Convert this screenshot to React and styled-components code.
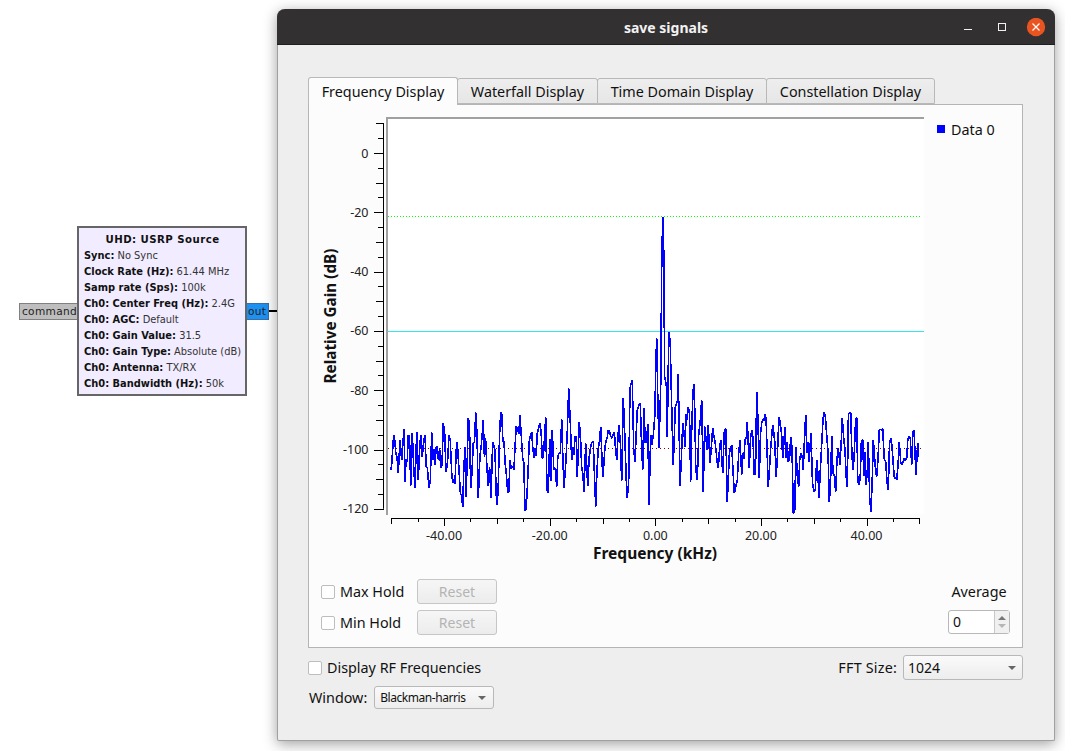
import React from 'react';
import styled, { createGlobalStyle } from 'styled-components';

const Global = createGlobalStyle`
  html, body { margin: 0; padding: 0; background: #fff; overflow: hidden; }
  #root { width: 1065px; height: 751px; }
`;

const Desktop = styled.div`
  position: relative;
  width: 1065px;
  height: 751px;
  overflow: hidden;
  background: #fff;
  font-family: "Noto Sans", sans-serif;
`;

/* ---------- flowgraph block ---------- */
const Block = styled.div`
  position: absolute;
  left: 77px;
  top: 226px;
  width: 170px;
  height: 170px;
  box-sizing: border-box;
  border: 2px solid #666;
  background: #f1ecff;
  padding: 4px 0 0 5px;
  font-family: "DejaVu Sans", sans-serif;
  font-size: 9.9px;
  line-height: 16px;
  color: #111;
  z-index: 2;
`;
const BlockTitle = styled.div`
  font-weight: bold;
  text-align: center;
  font-size: 10.2px;
  letter-spacing: 0.45px;
  margin-left: -4px;
`;
const BlockRow = styled.div`
  white-space: nowrap;
  color: #333;
  b { color: #111; }
`;
const Port = styled.div`
  position: absolute;
  top: 303px;
  height: 17px;
  box-sizing: border-box;
  border: 1px solid ${p => p.$border};
  background: ${p => p.$bg};
  font-family: "DejaVu Sans", sans-serif;
  font-size: 10.6px;
  line-height: 15px;
  letter-spacing: 0.3px;
  color: #222;
  white-space: nowrap;
  left: ${p => p.$left}px;
  width: ${p => p.$width}px;
  padding-left: ${p => p.$pad}px;
`;
const Wire = styled.div`
  position: absolute;
  left: 269px;
  top: 310px;
  width: 9px;
  height: 2px;
  background: #000;
`;

/* ---------- window ---------- */
const Win = styled.div`
  position: absolute;
  left: 277px;
  top: 9px;
  width: 778px;
  height: 732px;
  box-sizing: border-box;
  background: #eeeeee;
  border-radius: 8px 8px 2px 2px;
  border: 1px solid #a0a0a0;
  border-top: none;
  box-shadow: 0 3px 14px rgba(0, 0, 0, 0.38);
  display: flex;
  flex-direction: column;
  color: #111;
`;
const TitleBar = styled.div`
  position: relative;
  flex: 0 0 36px;
  margin: 0 -1px;
  box-sizing: border-box;
  background: #323030;
  border-bottom: 1px solid #1f1f1f;
  border-radius: 8px 8px 0 0;
  display: flex;
  align-items: center;
  justify-content: center;
`;
const TitleText = styled.div`
  color: #f2f2f2;
  font-weight: 700;
  font-size: 14px;
  margin-top: 1px;
`;
const WinButtons = styled.div`
  position: absolute;
  right: 0;
  top: 9px;
  display: flex;
`;
const Body = styled.div`
  flex: 1;
  padding: 32px 31px 0 30px;
  display: flex;
  flex-direction: column;
`;
const TabBar = styled.div`
  display: flex;
  align-items: flex-end;
  height: 27px;
  position: relative;
  z-index: 1;
`;
const Tab = styled.div`
  box-sizing: border-box;
  width: ${p => p.$w}px;
  height: ${p => (p.$active ? 28 : 26)}px;
  margin-bottom: ${p => (p.$active ? -1 : 0)}px;
  margin-right: ${p => (p.$last ? 0 : -1)}px;
  border: 1px solid #b8b8b8;
  border-bottom: ${p => (p.$active ? 'none' : '1px solid #b8b8b8')};
  border-radius: 3px 3px 0 0;
  background: ${p => (p.$active ? '#fcfcfc' : 'linear-gradient(#eeeeee, #e6e6e6)')};
  text-align: center;
  font-size: 14.35px;
  line-height: ${p => (p.$active ? 27 : 26)}px;
  white-space: nowrap;
  position: relative;
  z-index: ${p => (p.$active ? 2 : 0)};
`;
const Pane = styled.div`
  box-sizing: border-box;
  height: 544px;
  border: 1px solid #b4b4b4;
  background: #fcfcfc;
  display: flex;
  flex-direction: column;
`;
const ChartRow = styled.div`
  display: flex;
  height: 465px;
`;
const Plot = styled.svg`
  display: block;
  flex: 0 0 616px;
  width: 616px;
  height: 465px;
  font-family: "Noto Sans", sans-serif;
`;
const Legend = styled.div`
  display: flex;
  align-items: center;
  gap: 6px;
  height: 20px;
  margin: 14px 0 0 12px;
  font-size: 14.35px;
`;
const LegendMark = styled.span`
  width: 8px;
  height: 8px;
  background: #0000ff;
`;
const Controls = styled.div`
  display: flex;
  justify-content: space-between;
  padding: 9px 12px 0 12px;
`;
const HoldCol = styled.div`
  display: flex;
  flex-direction: column;
  gap: 6px;
`;
const HoldRow = styled.div`
  display: grid;
  grid-template-columns: 96px 80px;
  align-items: center;
`;
const CheckLabel = styled.div`
  display: flex;
  align-items: center;
  gap: 5px;
  font-size: 14.35px;
  white-space: nowrap;
`;
const Box = styled.span`
  flex: none;
  width: 14px;
  height: 14px;
  box-sizing: border-box;
  border: 1px solid #bdbdbd;
  border-radius: 2px;
  background: #fff;
`;
const ResetBtn = styled.div`
  box-sizing: border-box;
  height: 25px;
  border: 1px solid #c6c6c6;
  border-radius: 3px;
  background: linear-gradient(#f6f6f6, #ececec);
  color: #b4b4b4;
  font-size: 14px;
  line-height: 23px;
  text-align: center;
`;
const AvgCol = styled.div`
  display: flex;
  flex-direction: column;
  align-items: center;
  width: 62px;
  gap: 7px;
`;
const AvgLabel = styled.div`
  font-size: 14.35px;
  line-height: 25px;
  height: 25px;
  margin-bottom: -7px;
  padding-bottom: 6px;
  white-space: nowrap;
`;
const Spin = styled.div`
  width: 62px;
  height: 24px;
  box-sizing: border-box;
  border: 1px solid #b8b8b8;
  border-radius: 3px;
  background: #fff;
  display: flex;
  font-size: 14px;
  line-height: 22px;
`;
const SpinValue = styled.div`
  flex: 1;
  padding-left: 4px;
`;
const SpinArrows = styled.div`
  width: 14px;
  border-left: 1px solid #c8c8c8;
  background: #f0f0f0;
  display: flex;
  flex-direction: column;
  align-items: center;
  justify-content: center;
  gap: 4px;
`;
const Tri = styled.span`
  width: 0;
  height: 0;
  border-left: ${p => p.$size}px solid transparent;
  border-right: ${p => p.$size}px solid transparent;
  ${p => (p.$up ? 'border-bottom' : 'border-top')}: ${p => p.$h}px solid ${p => p.$color};
`;
const BottomRow = styled.div`
  display: flex;
  align-items: center;
  justify-content: space-between;
  height: 25px;
  margin-top: 7px;
`;
const WindowRow = styled.div`
  display: flex;
  align-items: center;
  gap: 7px;
  height: 23px;
  margin-top: 6px;
  padding-left: 1px;
  font-size: 14.35px;
`;
const FieldGroup = styled.div`
  display: flex;
  align-items: center;
  gap: 6px;
  font-size: 14.35px;
  letter-spacing: 0.2px;
`;
const Combo = styled.div`
  box-sizing: border-box;
  width: ${p => p.$w}px;
  height: ${p => p.$h}px;
  border: 1px solid #b8b8b8;
  border-radius: 3px;
  background: linear-gradient(#fafafa, #ededed);
  display: flex;
  align-items: center;
  justify-content: space-between;
  padding: 0 ${p => p.$right}px 0 ${p => p.$left}px;
  font-size: ${p => p.$font}px;
  letter-spacing: ${p => p.$track}px;
  white-space: nowrap;
`;

const NOISE_A = [[33,270],[35,252],[40,180],[43,165],[47,215],[55,280],[60,180],[65,240],[72,147],[75,305],[85,165],[92,318],[97,160],[105,325],[110,155],[115,300],[122,165],[127,232],[135,165],[142,262],[147,325],[155,157],[165,255],[172,200],[182,265],[190,128],[198,275],[207,165],[215,280],[225,312],[232,187],[238,285],[248,382],[255,200],[258,350],[265,113],[272,325],[280,190],[287,97],[295,355],[300,225],[310,120],[320,250],[333,355],[338,185],[345,210],[352,375],[362,95],[372,185],[383,338],[390,240],[402,270],[405,200],[420,105],[428,235],[435,393],[442,325],[448,185],[455,155],[462,235],[472,160],[480,128],[487,235],[497,110],[505,340],[517,150],[530,320],[537,220],[545,118],[552,325],[558,240],[566,25],[575,240],[585,170],[592,292],[598,125],[605,262],[612,335],[617,190],[623,318],[632,200],[640,185],[647,380],[655,205],[662,140],[668,290],[675,200],[685,150],[695,175],[703,155],[710,240],[716,135],[725,303],[730,55],[735,180],[742,355],[750,25],[757,0],[765,245],[772,90],[781,70],[788,270],[792,85],[807,375],[812,165]];
const CENTER = [[125,735],[130,705],[135,640],[137,495],[140,415],[143,580],[147,745],[152,560],[155,205],[158,50],[161,150],[164,530],[170,565],[172,710],[176,415],[178,395],[181,440],[186,660],[190,795],[196,620],[202,605],[205,522]];
const NOISE_B = [[120,318],[128,130],[135,200],[145,80],[152,305],[163,12],[172,300],[185,60],[190,335],[205,135],[210,250],[218,145],[225,185],[235,265],[242,180],[248,280],[257,145],[262,365],[268,225],[275,195],[283,340],[292,300],[300,180],[305,285],[315,180],[322,125],[328,265],[335,150],[343,285],[350,35],[358,295],[365,130],[375,103],[385,320],[392,205],[398,135],[408,290],[418,112],[428,235],[435,140],[445,245],[452,170],[460,400],[468,200],[476,320],[483,220],[490,270],[497,105],[507,245],[513,160],[522,335],[530,240],[537,355],[545,195],[553,95],[560,165],[568,365],[575,168],[587,335],[595,205],[600,255],[607,115],[615,210],[622,320],[632,97],[640,270],[650,110],[657,315],[668,180],[678,315],[685,185],[693,395],[700,180],[710,290],[718,150],[728,145],[737,245],[745,330],[752,175],[760,255],[770,300],[778,185],[787,255],[800,235],[807,170],[815,255],[822,150],[828,285],[833,190],[836,230]];

/* Traced peaks and dips, with fine samples filled in between them inside the same envelope. */
function buildTrace() {
  const raw = [
    ...NOISE_A.map(([x, y]) => [380 + x / 3, 380 + y / 3]),
    ...CENTER.map(([x, y]) => [610 + x / 3, 200 + y / 3]),
    ...NOISE_B.map(([x, y]) => [640 + x / 3, 380 + y / 3]),
  ];
  const out = [];
  raw.forEach((p, i) => {
    out.push(p);
    const n = raw[i + 1];
    if (!n) return;
    const dx = n[0] - p[0];
    const lo = Math.min(p[1], n[1]);
    const hi = Math.max(p[1], n[1]);
    const steps = p[1] > 340 || n[1] > 340 ? Math.floor(dx / 1.1) : 1;
    for (let s = 1; s < steps; s++) {
      const h = Math.sin(i * 12.9898 + s * 78.233) * 43758.5453;
      const rnd = h - Math.floor(h);
      out.push([p[0] + (dx * s) / steps, lo + (hi - lo) * rnd]);
    }
  });
  return out.map(([x, y]) => `${x.toFixed(1)},${y.toFixed(1)}`).join(' ');
}
const TRACE = buildTrace();

const dbY = db => 153 - db * 2.965;
const kx = k => 655.3 + k * 5.28;
const yTicks = [];
for (let d = 10; d >= -120; d -= 5) yTicks.push(d);
const xTicks = [];
for (let k = -50; k <= 50; k += 5) xTicks.push(k);

function Chart() {
  return (
    <Plot viewBox="309 105 616 465">
      <rect x="387" y="118" width="537" height="396" fill="#fff" />
      <line x1="383.5" y1={dbY(10)} x2="383.5" y2={dbY(-120)} stroke="#000" />
      {yTicks.map(d => {
        const y = Math.round(dbY(d)) + 0.5;
        const len = d % 20 === 0 ? 9 : d % 10 === 0 ? 7 : 5;
        return <line key={d} x1={383 - len} y1={y} x2="384" y2={y} stroke="#000" />;
      })}
      {[0, -20, -40, -60, -80, -100, -120].map(d => (
        <text key={d} x="368.5" y={dbY(d) + 4.5} textAnchor="end" fontSize="12.5" fill="#222">{d}</text>
      ))}
      <line x1="391" y1="518.5" x2="920" y2="518.5" stroke="#000" />
      {xTicks.map(k => {
        const x = Math.round(kx(k)) + 0.5;
        const len = k % 20 === 0 ? 7 : k % 10 === 0 ? 5 : 3;
        return <line key={k} x1={x} y1="518" x2={x} y2={519 + len} stroke="#000" />;
      })}
      {[-40, -20, 0, 20, 40].map(k => (
        <text key={k} x={kx(k)} y="540" textAnchor="middle" fontSize="12.5" fill="#222">{k.toFixed(2)}</text>
      ))}
      <rect x="386" y="117" width="2" height="398" fill="#a0a0a0" />
      <rect x="386" y="117" width="538" height="2" fill="#a0a0a0" />
      <line x1="388" y1="331.5" x2="924" y2="331.5" stroke="#35e6ee" />
      <line x1="388" y1="216.5" x2="922" y2="216.5" stroke="#00ff00" strokeDasharray="1 2" />
      <line x1="388" y1="448.5" x2="922" y2="448.5" stroke="#8b0000" strokeDasharray="1 3" />
      <polyline points={TRACE} fill="none" stroke="#0000ff" strokeWidth="1.6" shapeRendering="crispEdges" strokeLinejoin="bevel" />
      <text x="655" y="558.5" textAnchor="middle" fontSize="15.5" fontWeight="700" fill="#111">Frequency (kHz)</text>
      <text x="336" y="316" textAnchor="middle" fontSize="15.3" fontWeight="700" fill="#111" transform="rotate(-90 336 316)">Relative Gain (dB)</text>
    </Plot>
  );
}

const rows = [
  ['Sync:', 'No Sync'],
  ['Clock Rate (Hz):', '61.44 MHz'],
  ['Samp rate (Sps):', '100k'],
  ['Ch0: Center Freq (Hz):', '2.4G'],
  ['Ch0: AGC:', 'Default'],
  ['Ch0: Gain Value:', '31.5'],
  ['Ch0: Gain Type:', 'Absolute (dB)'],
  ['Ch0: Antenna:', 'TX/RX'],
  ['Ch0: Bandwidth (Hz):', '50k'],
];

const tabs = [
  ['Frequency Display', 150],
  ['Waterfall Display', 141],
  ['Time Domain Display', 170],
  ['Constellation Display', 169],
];

export default function App() {
  return (
    <Desktop>
      <Global />
      <Port $left={19} $width={60} $pad={2} $bg="#bebebe" $border="#808080">command</Port>
      <Port $left={246} $width={23} $pad={1} $bg="#1e90f0" $border="#3a6ea5">out</Port>
      <Wire />
      <Block>
        <BlockTitle>UHD: USRP Source</BlockTitle>
        {rows.map(([k, v]) => (
          <BlockRow key={k}><b>{k}</b> {v}</BlockRow>
        ))}
      </Block>
      <Win>
        <TitleBar>
          <TitleText>save signals</TitleText>
          <WinButtons>
            <svg width="92" height="20" viewBox="0 0 92 20">
              <rect x="1" y="11" width="8" height="1" fill="#f2f2f2" />
              <rect x="35.5" y="5.5" width="7" height="7" fill="none" stroke="#f2f2f2" />
              <circle cx="73" cy="9" r="9.2" fill="#e95420" />
              <path d="M69.5 5.5 L76.5 12.5 M76.5 5.5 L69.5 12.5" stroke="#fff" strokeWidth="1.2" />
            </svg>
          </WinButtons>
        </TitleBar>
        <Body>
          <TabBar>
            {tabs.map(([t, w], i) => (
              <Tab key={t} $w={w} $active={i === 0} $last={i === 3}>{t}</Tab>
            ))}
          </TabBar>
          <Pane>
            <ChartRow>
              <Chart />
              <Legend><LegendMark />Data 0</Legend>
            </ChartRow>
            <Controls>
              <HoldCol>
                <HoldRow>
                  <CheckLabel><Box />Max Hold</CheckLabel>
                  <ResetBtn>Reset</ResetBtn>
                </HoldRow>
                <HoldRow>
                  <CheckLabel><Box />Min Hold</CheckLabel>
                  <ResetBtn>Reset</ResetBtn>
                </HoldRow>
              </HoldCol>
              <AvgCol>
                <AvgLabel>Average</AvgLabel>
                <Spin>
                  <SpinValue>0</SpinValue>
                  <SpinArrows>
                    <Tri $up $size={4} $h={4} $color="#777" />
                    <Tri $size={4} $h={4} $color="#b5b5b5" />
                  </SpinArrows>
                </Spin>
              </AvgCol>
            </Controls>
          </Pane>
          <BottomRow>
            <CheckLabel><Box />Display RF Frequencies</CheckLabel>
            <FieldGroup>
              FFT Size:
              <Combo $w={120} $h={25} $font={14} $left={4} $right={6} $track={0}>
                1024
                <Tri $size={4} $h={4} $color="#666" />
              </Combo>
            </FieldGroup>
          </BottomRow>
          <WindowRow>
            Window:
            <Combo $w={120} $h={23} $font={12} $left={5} $right={7} $track={-0.45}>
              Blackman-harris
              <Tri $size={4} $h={4} $color="#666" />
            </Combo>
          </WindowRow>
        </Body>
      </Win>
    </Desktop>
  );
}
